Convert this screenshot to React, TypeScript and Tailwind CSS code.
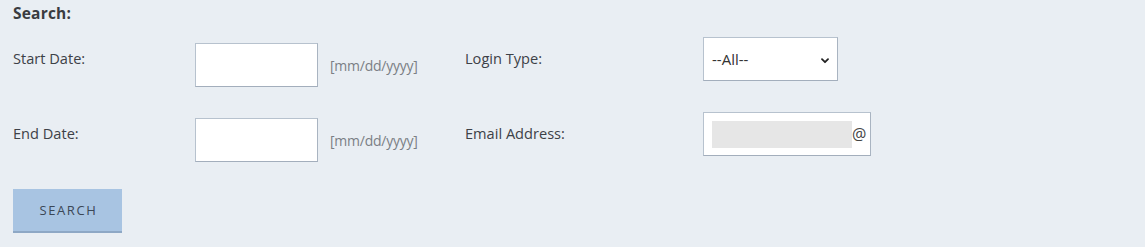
import React from "react";

function Chevron() {
  return (
    <svg width="8" height="6" viewBox="0 0 8 6" className="block">
      <path d="M1 1.2 L4 4.2 L7 1.2" fill="none" stroke="#222" strokeWidth="1.8" strokeLinecap="round" strokeLinejoin="round" />
    </svg>
  );
}

const inputCls =
  "bg-white border border-[#b7c2ce] border-b-[#a3aebc] border-r-[#a9b4c1]";

export default function App() {
  return (
    <div className="min-h-screen w-full bg-[#e9eef3] font-['Open_Sans',sans-serif] text-[#3d4147] pl-[13px] pt-[3px]">
      <div className="font-bold text-[15.5px] leading-[20px] tracking-[0.2px] text-[#3a3c40]">Search:</div>

      <div className="flex items-start h-[50px] mt-[14px]">
        <div className="w-[182px] mt-[11px] text-[14.6px] leading-[20px]">Start Date:</div>
        <div className="w-[270px] flex items-center mt-[6px]">
          <div className={`w-[123px] h-[44px] ${inputCls}`} />
          <span className="ml-[12px] text-[14px] leading-[20px] text-[#7b7f85] mt-[2px] tracking-[-0.25px]">[mm/dd/yyyy]</span>
        </div>
        <div className="w-[238px] mt-[11px] text-[14.6px] leading-[20px]">Login Type:</div>
        <div className={`w-[135px] h-[44px] ${inputCls} flex items-center justify-between pl-[8px] pr-[8px]`}>
          <span className="text-[15px] leading-[20px] text-[#333]">--All--</span>
          <span className="mt-[3px]"><Chevron /></span>
        </div>
      </div>

      <div className="flex items-start h-[50px] mt-[25px]">
        <div className="w-[182px] mt-[11px] text-[14.6px] leading-[20px]">End Date:</div>
        <div className="w-[270px] flex items-center mt-[6px]">
          <div className={`w-[123px] h-[44px] ${inputCls}`} />
          <span className="ml-[12px] text-[14px] leading-[20px] text-[#7b7f85] mt-[2px] tracking-[-0.25px]">[mm/dd/yyyy]</span>
        </div>
        <div className="w-[238px] mt-[11px] text-[14.6px] leading-[20px]">Email Address:</div>
        <div className={`w-[168px] h-[44px] ${inputCls} flex items-center pl-[8px]`}>
          <div className="w-[140px] h-[27px] bg-[#e6e6e6] shrink-0" />
          <span className="text-[16px] leading-[20px] text-[#444] shrink-0">@</span>
        </div>
      </div>

      <button className="mt-[27px] w-[109px] h-[44px] bg-[#a8c4e2] border-b-[2px] border-[#8ea8c5] text-[13px] tracking-[1.6px] text-[#3b4756] flex items-center justify-center pt-[1px] pl-[2px]">
        SEARCH
      </button>
    </div>
  );
}
